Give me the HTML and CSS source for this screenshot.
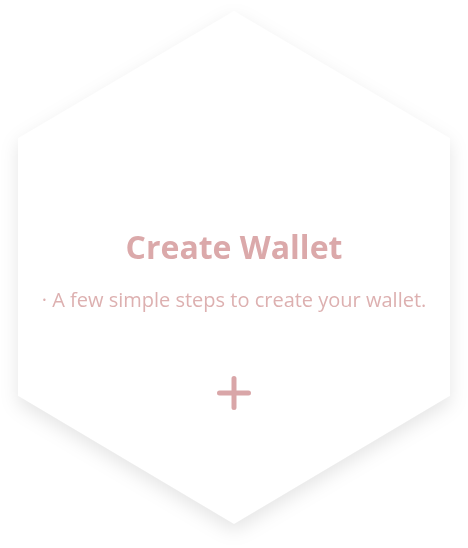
FILE: index.html
```html
<!DOCTYPE html>
<html lang="en">
<head>
<meta charset="utf-8">
<title>Create Wallet</title>
<link rel="stylesheet" href="styles.css">
</head>
<body>
<div class="stage">
  <div class="hex-shadow">
    <div class="hex">
      <h1 class="title">Create Wallet</h1>
      <p class="subtitle">· A few simple steps to create your wallet.</p>
      <button class="add" type="button" aria-label="Create wallet">
        <svg width="34" height="34" viewBox="0 0 34 34" aria-hidden="true">
          <path d="M17 2.5V31.5M2.5 17H31.5" stroke="currentColor" stroke-width="5" stroke-linecap="round" fill="none"/>
        </svg>
      </button>
    </div>
  </div>
</div>
</body>
</html>
```

FILE: styles.css
```css
html, body {
  margin: 0;
  padding: 0;
  background: #ffffff;
}

body {
  width: 468px;
  height: 548px;
  overflow: hidden;
  font-family: "Open Sans", "Liberation Sans", sans-serif;
}

.stage {
  padding: 11px 18px 24px;
}

.hex-shadow {
  width: 432px;
  height: 513px;
  filter: drop-shadow(0 7px 9px rgba(0, 0, 0, 0.1));
}

.hex {
  width: 100%;
  height: 100%;
  box-sizing: border-box;
  background: #ffffff;
  clip-path: polygon(50% 0, 100% 24.8%, 100% 75%, 50% 100%, 0 75%, 0 24.8%);
  display: flex;
  flex-direction: column;
  align-items: center;
  padding-top: 216px;
  color: #dba9aa;
}

.title {
  margin: 0;
  font-size: 32px;
  line-height: 40px;
  font-weight: 700;
  color: #dba9aa;
}

.subtitle {
  margin: 21px 0 0;
  font-size: 20px;
  line-height: 24px;
  font-weight: 400;
  color: #ddb0b0;
}

.add {
  margin-top: 64px;
  padding: 0;
  border: 0;
  background: none;
  color: #d9a6a8;
  display: flex;
  cursor: pointer;
}
```
